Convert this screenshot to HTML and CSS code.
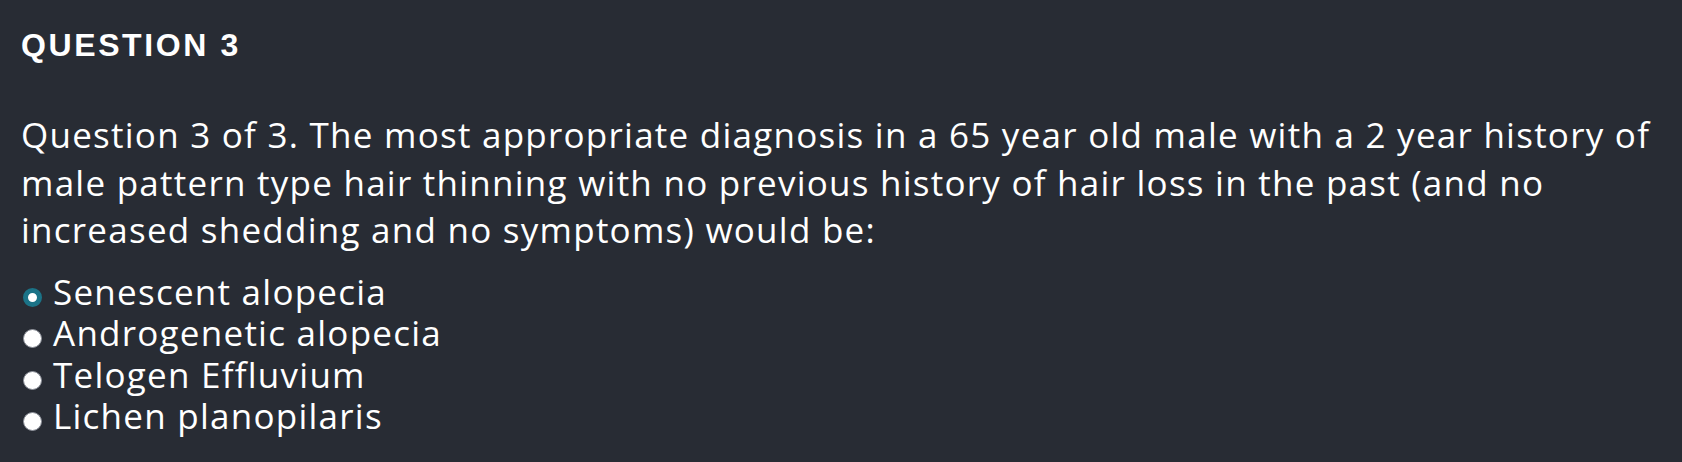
FILE: index.html
```html
<!DOCTYPE html>
<html lang="en">
<head>
<meta charset="utf-8">
<title>Question 3</title>
<link rel="stylesheet" href="styles.css">
</head>
<body>
<main class="quiz">
  <h2 class="quiz-title">QUESTION 3</h2>
  <p class="quiz-question">Question 3 of 3. The most appropriate diagnosis in a 65 year old male with a 2 year history of male pattern type hair thinning with no previous history of hair loss in the past (and no increased shedding and no symptoms) would be:</p>
  <ul class="options">
    <li class="option"><input class="radio" type="radio" name="q3" checked><span class="option-label">Senescent alopecia</span></li>
    <li class="option"><input class="radio" type="radio" name="q3"><span class="option-label">Androgenetic alopecia</span></li>
    <li class="option"><input class="radio" type="radio" name="q3"><span class="option-label">Telogen Effluvium</span></li>
    <li class="option"><input class="radio" type="radio" name="q3"><span class="option-label">Lichen planopilaris</span></li>
  </ul>
</main>
</body>
</html>
```
FILE: styles.css
```css
html, body {
  margin: 0;
  padding: 0;
  background: #282c34;
  color: #ffffff;
}
.quiz {
  padding: 25px 14px 0 21px;
}
.quiz-title {
  margin: 0;
  font-family: "Liberation Sans", Arial, sans-serif;
  font-weight: bold;
  font-size: 32px;
  letter-spacing: 2.6px;
  line-height: 40px;
}
.quiz-question {
  margin: 46px 0 17px 0;
  font-family: "Open Sans", sans-serif;
  font-size: 35px;
  letter-spacing: 1.25px;
  line-height: 47.5px;
}
.options {
  list-style: none;
  margin: 0;
  padding: 0;
  font-family: "Open Sans", sans-serif;
  font-size: 35px;
  letter-spacing: 1.25px;
  line-height: 41.6px;
}
.option {
  display: flex;
  align-items: flex-start;
  gap: 11px;
}
.option-label {
  display: block;
  height: 41.6px;
}
.radio {
  appearance: none;
  -webkit-appearance: none;
  box-sizing: border-box;
  margin: 17px 0 0 2px;
  width: 19px;
  height: 19px;
  border-radius: 50%;
  background: #ffffff;
  border: 1.5px solid #8c9099;
  flex: none;
}
.radio:checked {
  background: #ffffff;
  border: 5px solid #1b7387;
}
```
